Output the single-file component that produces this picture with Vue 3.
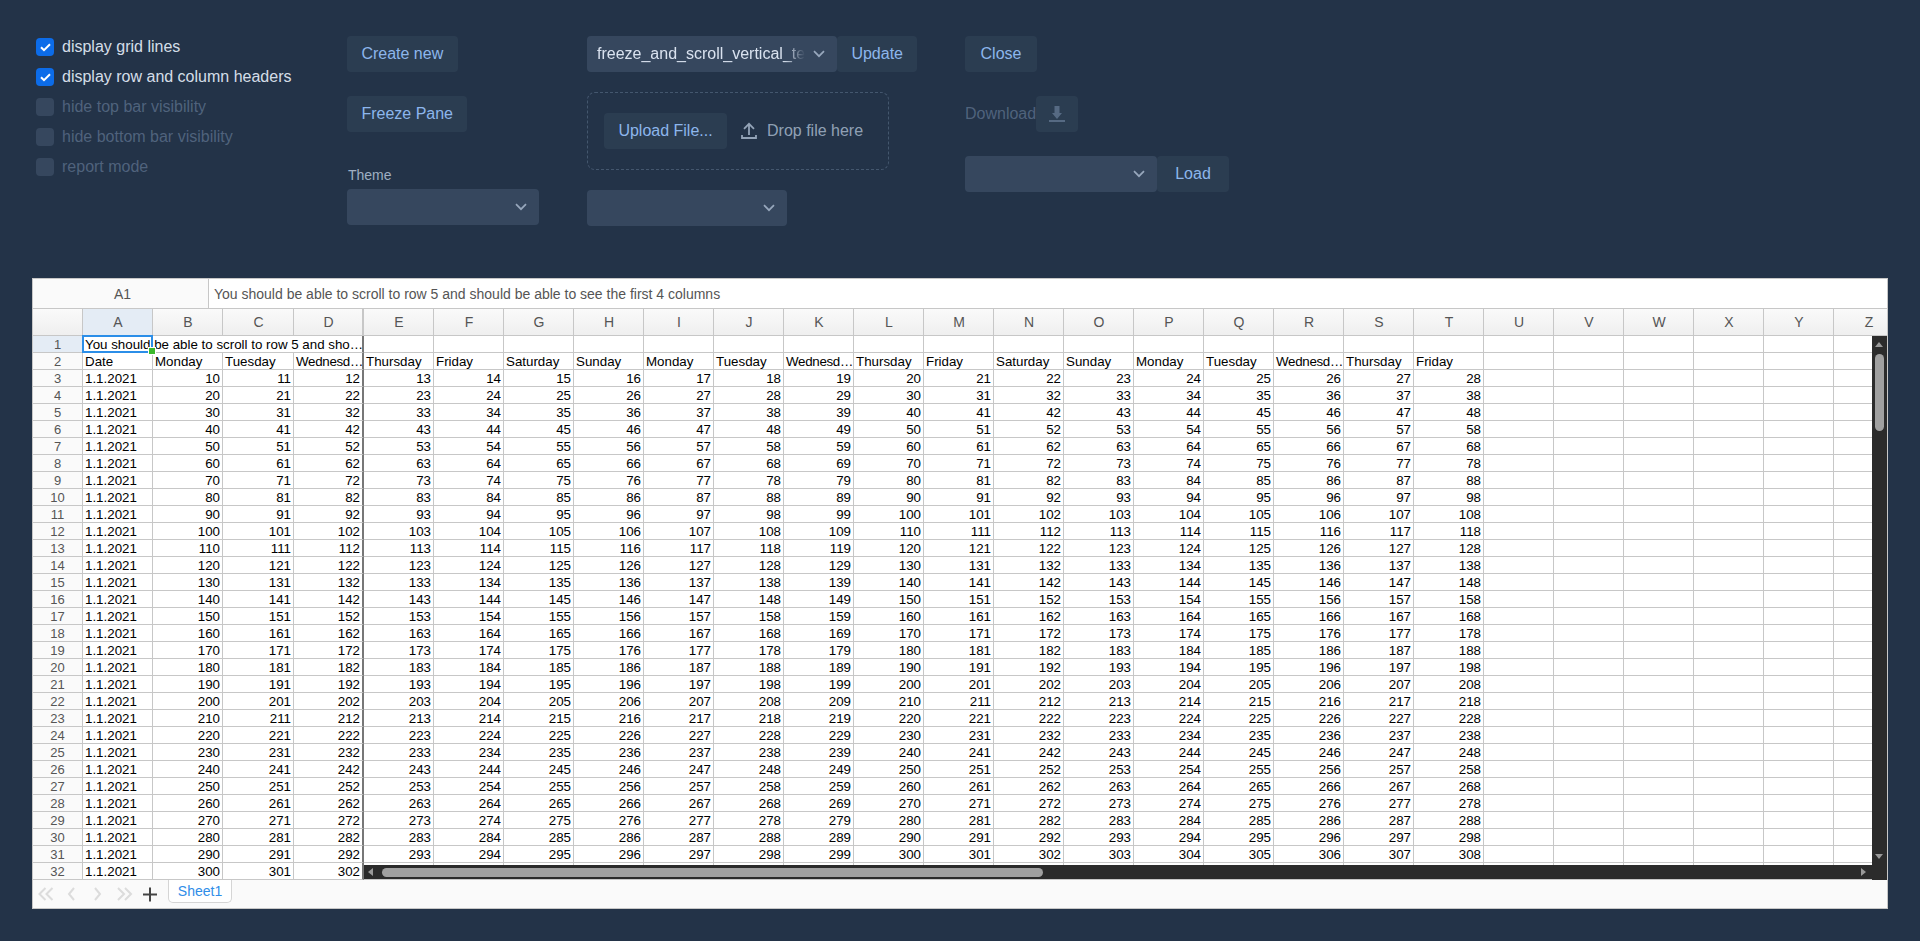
<script setup>
import { computed } from 'vue'

const options = [
  { label: 'display grid lines', checked: true },
  { label: 'display row and column headers', checked: true },
  { label: 'hide top bar visibility', disabled: true },
  { label: 'hide bottom bar visibility', disabled: true },
  { label: 'report mode', disabled: true }
]

const columns = 'ABCDEFGHIJKLMNOPQRSTUVWXYZ'.split('')
const weekdays = ['Monday', 'Tuesday', 'Wednesd…', 'Thursday', 'Friday', 'Saturday', 'Sunday']
const title = 'You should be able to scroll to row 5 and should be able to see the first 4 columns'
const titleCut = 'You should be able to scroll to row 5 and sho…'

function cellText(row, col) {
  if (row === 2) {
    if (col === 0) return 'Date'
    return col < 20 ? weekdays[(col - 1) % 7] : ''
  }
  if (col === 0) return '1.1.2021'
  return col < 20 ? String((row - 2) * 10 + col - 1) : ''
}

const rows = computed(() => {
  const out = []
  for (let r = 2; r <= 32; r++) {
    out.push({
      num: r,
      cells: columns.map((name, c) => {
        const text = cellText(r, c)
        return {
          name,
          text,
          number: r > 2 && c > 0,
          edge: c === 3,
          tight: text.endsWith('…')
        }
      })
    })
  }
  return out
})
</script>

<template>
  <div class="page">
    <div class="panel">
      <div class="col col-options">
        <div
          v-for="o in options"
          :key="o.label"
          class="check"
          :class="{ disabled: o.disabled }"
        >
          <span class="box" :class="{ on: o.checked }">
            <svg v-if="o.checked" viewBox="0 0 18 18" width="18" height="18">
              <path d="M5 9.200l3 3 6-6" fill="none" stroke="#fff" stroke-width="2" />
            </svg>
          </span>
          <span>{{ o.label }}</span>
        </div>
      </div>

      <div class="col col-actions">
        <div><button class="btn">Create new</button></div>
        <div class="next"><button class="btn">Freeze Pane</button></div>
        <div class="field-label">Theme</div>
        <div class="select theme">
          <svg class="chev" viewBox="0 0 12 8" width="12" height="8"><path d="M1 1.2l5 5 5-5" /></svg>
        </div>
      </div>

      <div class="col col-files">
        <div class="row">
          <div class="select file">
            <span class="value">freeze_and_scroll_vertical_te</span>
            <svg class="chev" viewBox="0 0 12 8" width="12" height="8"><path d="M1 1.2l5 5 5-5" /></svg>
          </div>
          <button class="btn update">Update</button>
        </div>
        <div class="drop">
          <button class="btn">Upload File...</button>
          <svg class="upload-icon" viewBox="0 0 16 18" width="16" height="18">
            <path d="M8 13V1.800M3 6.800l5-5 5 5M1 13v3h14v-3" fill="none" stroke="currentColor" stroke-width="1.800" />
          </svg>
          <span class="drop-text">Drop file here</span>
        </div>
        <div class="select small">
          <svg class="chev" viewBox="0 0 12 8" width="12" height="8"><path d="M1 1.2l5 5 5-5" /></svg>
        </div>
      </div>

      <div class="col col-io">
        <div><button class="btn">Close</button></div>
        <div class="row next">
          <span class="download">Download</span>
          <button class="btn icon-btn">
            <svg viewBox="0 0 16 16" width="16" height="16">
              <path d="M5.500 0h5v7H13l-5 6-5-6h2.500zM0 14h16v2H0z" fill="currentColor" />
            </svg>
          </button>
        </div>
        <div class="row next">
          <div class="select load">
            <svg class="chev" viewBox="0 0 12 8" width="12" height="8"><path d="M1 1.2l5 5 5-5" /></svg>
          </div>
          <button class="btn">Load</button>
        </div>
      </div>
    </div>

    <div class="sheet">
      <div class="formula">
        <div class="name-box">A1</div>
        <div class="formula-text">{{ title }}</div>
      </div>

      <div class="grid-wrap">
        <div class="grid">
          <div class="head corner"></div>
          <div
            v-for="(c, i) in columns"
            :key="c"
            class="head"
            :class="{ active: i === 0, 'head-edge': i === 3 }"
          >{{ c }}</div>

          <div class="row-head active">1</div>
          <div class="cell merged edge">{{ titleCut }}</div>
          <div v-for="c in columns.slice(4)" :key="'r1' + c" class="cell"></div>

          <template v-for="r in rows" :key="r.num">
            <div class="row-head">{{ r.num }}</div>
            <div
              v-for="c in r.cells"
              :key="c.name"
              class="cell"
              :class="{ number: c.number, edge: c.edge, tight: c.tight }"
            >{{ c.text }}</div>
          </template>
        </div>

        <div class="selection"><span class="handle"></span></div>

        <div class="scroll-v">
          <span class="arrow up"></span>
          <span class="thumb-v"></span>
          <span class="arrow down"></span>
        </div>
        <div class="scroll-h">
          <span class="arrow left"></span>
          <span class="thumb-h"></span>
          <span class="arrow right"></span>
        </div>
      </div>

      <div class="footer">
        <div class="nav">
          <svg viewBox="0 0 120 16" width="120" height="16">
            <path class="nav-off" d="M7.500 2l-6 6 6 6M14.500 2l-6 6 6 6M36 2l-5 6 5 6M57 2l5 6-5 6M80 2l6 6-6 6M87 2l6 6-6 6" />
            <path class="nav-on" d="M112 1.500v14M105 8.500h14" />
          </svg>
        </div>
        <div class="tab">Sheet1</div>
      </div>
    </div>
  </div>
</template>

<style>
html,
body {
  margin: 0;
  background: #233348;
}
</style>

<style scoped>
.page {
  height: 941px;
  overflow: hidden;
  background: #233348;
  font-family: "Liberation Sans", Arial, sans-serif;
  font-size: 16px;
  color: hsla(214, 96%, 96%, 0.9);
}

.panel {
  display: flex;
  height: 278px;
  box-sizing: border-box;
  padding: 36px 0 0 36px;
}

.col-options {
  width: 311px;
  padding-top: 2px;
  display: flex;
  flex-direction: column;
  gap: 12px;
}

.col-actions {
  width: 240px;
}

.col-files {
  width: 378px;
}

.row {
  display: flex;
  align-items: center;
}

.next {
  margin-top: 24px;
}

.check {
  display: flex;
  align-items: center;
  gap: 8px;
  height: 18px;
  line-height: 18px;
}

.check.disabled {
  color: hsla(214, 50%, 77%, 0.35);
}

.box {
  width: 18px;
  height: 18px;
  border-radius: 4px;
  background: hsla(214, 60%, 80%, 0.14);
}

.box svg {
  display: block;
}

.box.on {
  background: hsl(214, 90%, 48%);
}

.btn {
  min-width: 72px;
  height: 36px;
  padding: 0 14.4px;
  border: none;
  border-radius: 4px;
  background: hsla(214, 65%, 85%, 0.06);
  color: hsl(214, 72%, 74%);
  font-family: inherit;
  font-size: 16px;
}

.field-label {
  margin-top: 31px;
  height: 26px;
  line-height: 24px;
  padding-left: 1px;
  font-size: 14px;
  color: hsla(214, 87%, 92%, 0.69);
}

.select {
  position: relative;
  display: flex;
  align-items: center;
  height: 36px;
  box-sizing: border-box;
  padding: 0 10px;
  border-radius: 4px;
  background: hsla(214, 60%, 80%, 0.14);
}

.theme {
  width: 192px;
}

.file {
  width: 250px;
}

.small {
  width: 200px;
  margin-top: 20px;
}

.load {
  width: 192px;
}

.chev {
  position: absolute;
  right: 12px;
  top: 14px;
}

.chev path {
  fill: none;
  stroke: hsla(214, 87%, 92%, 0.6);
  stroke-width: 1.7;
}

.value {
  white-space: nowrap;
  -webkit-mask-image: linear-gradient(to left, transparent, #000 20px);
  mask-image: linear-gradient(to left, transparent, #000 20px);
}

.drop {
  display: flex;
  align-items: center;
  width: 302px;
  height: 78px;
  box-sizing: border-box;
  margin-top: 20px;
  padding: 0 16px;
  border: 1px dashed hsla(214, 64%, 82%, 0.23);
  border-radius: 8px;
  color: hsla(214, 87%, 92%, 0.62);
}

.upload-icon {
  margin-left: 14px;
}

.drop-text {
  margin-left: 10px;
}

.download {
  width: 71px;
  color: hsla(214, 50%, 77%, 0.35);
}

.icon-btn {
  min-width: 0;
  width: 42px;
  padding: 0;
  color: hsla(214, 50%, 77%, 0.35);
}

.icon-btn svg {
  display: block;
  margin: 0 auto;
}

.sheet {
  width: 1856px;
  height: 631px;
  box-sizing: border-box;
  margin-left: 32px;
  border: 1px solid #c7c7c7;
  background: #fafafa;
  color: #000;
  font-size: 13px;
}

.formula {
  display: flex;
  height: 30px;
  box-sizing: border-box;
  border-bottom: 1px solid #c7c7c7;
  line-height: 30px;
  font-size: 14px;
  color: #555;
}

.name-box {
  width: 176px;
  box-sizing: border-box;
  padding-left: 4px;
  border-right: 1px solid #c7c7c7;
  text-align: center;
  background: #fafafa;
}

.formula-text {
  flex: 1;
  padding-left: 5px;
  background: #fff;
}

.grid-wrap {
  position: relative;
  height: 571px;
  overflow: hidden;
}

.grid {
  display: grid;
  grid-template-columns: 50px 70px 70px 71px repeat(22, 70px) 70px;
  grid-auto-rows: 17px;
  grid-template-rows: 27px;
  width: max-content;
}

.head,
.row-head {
  box-sizing: border-box;
  border-right: 1px solid #c7c7c7;
  border-bottom: 1px solid #c7c7c7;
  text-align: center;
  color: #555;
}

.head {
  padding-left: 1px;
  font-size: 14px;
  line-height: 27px;
  background: linear-gradient(#fafafa, #efefef);
}

.head.active {
  background: #e4ecf5;
}

.head-edge {
  border-right-width: 2px;
}

.row-head {
  line-height: 18px;
  background: #fafafa;
}

.row-head.active {
  background: #e4ecf5;
}

.cell {
  box-sizing: border-box;
  padding: 0 0 0 2px;
  border-right: 1px solid #c7c7c7;
  border-bottom: 1px solid #c7c7c7;
  background: #fff;
  font-size: 13.33px;
  line-height: 18px;
  white-space: nowrap;
  overflow: hidden;
}

.tight {
  letter-spacing: -0.3px;
}

.merged {
  grid-column: span 4;
}

.edge {
  border-right: 2px solid #777;
}

.number {
  padding: 0 2px 0 0;
  text-align: right;
}

.selection {
  position: absolute;
  left: 49px;
  top: 26px;
  width: 71px;
  height: 18px;
  box-sizing: border-box;
  border: 2px solid #2b8ee8;
}

.handle {
  position: absolute;
  right: -4px;
  bottom: -3px;
  width: 6px;
  height: 6px;
  background: #3bb82c;
  outline: 1px solid #fff;
}

.scroll-v {
  position: absolute;
  top: 27px;
  right: 0;
  bottom: 0;
  width: 15px;
  background: #2b2b2b;
}

.scroll-h {
  position: absolute;
  left: 331px;
  right: 0;
  bottom: 1px;
  height: 14px;
  background: #2b2b2b;
}

.thumb-v {
  position: absolute;
  left: 3px;
  top: 18px;
  width: 9px;
  height: 77px;
  border-radius: 5px;
  background: #a0a0a0;
}

.thumb-h {
  position: absolute;
  left: 18px;
  top: 3px;
  width: 661px;
  height: 9px;
  border-radius: 5px;
  background: #a0a0a0;
}

.arrow {
  position: absolute;
  width: 0;
  height: 0;
  border-style: solid;
  border-color: transparent;
}

.up {
  left: 3px;
  top: 6px;
  border-width: 0 4.5px 5px;
  border-bottom-color: #999;
}

.down {
  left: 3px;
  bottom: 21px;
  border-width: 5px 4.5px 0;
  border-top-color: #999;
}

.left {
  left: 4px;
  top: 3px;
  border-width: 4.500px 5px 4.500px 0;
  border-right-color: #999;
}

.right {
  right: 21px;
  top: 3px;
  border-width: 4.500px 0 4.500px 5px;
  border-left-color: #999;
}

.footer {
  display: flex;
  height: 28px;
  background: #fafafa;
}

.nav {
  width: 135px;
  box-sizing: border-box;
  padding: 6px 0 0 5px;
}

.nav svg {
  display: block;
}

.nav-off {
  fill: none;
  stroke: #dcdcdc;
  stroke-width: 2;
}

.nav-on {
  fill: none;
  stroke: #444;
  stroke-width: 2;
}

.tab {
  width: 64px;
  height: 23px;
  box-sizing: border-box;
  border: 1px solid #d5d5d5;
  border-top: none;
  border-radius: 0 0 5px 5px;
  background: #fff;
  color: #2f8de8;
  font-size: 14px;
  line-height: 22px;
  text-align: center;
}
</style>
